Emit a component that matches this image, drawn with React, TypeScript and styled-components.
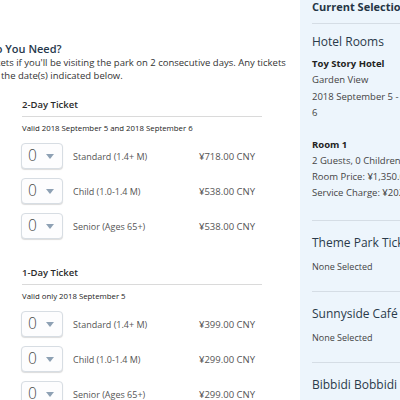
import React from "react";
import styled, { createGlobalStyle } from "styled-components";

const Global = createGlobalStyle`
  html, body { margin: 0; padding: 0; background: #fff; overflow: hidden; }
  body { font-family: "Open Sans", "Noto Sans", "Liberation Sans", sans-serif; }
`;

const Page = styled.div`
  display: flex;
  width: 400px;
  height: 400px;
  overflow: hidden;
`;

const Main = styled.div`
  width: 300px;
  flex: none;
  padding-top: 40px;
  box-sizing: border-box;
  overflow: hidden;
`;

const Intro = styled.div`
  margin-left: -88px;
  white-space: nowrap;
`;

const Heading = styled.h1`
  margin: 0;
  font-size: 11px;
  line-height: 17px;
  font-weight: 600;
  color: #26384c;
`;

const Para = styled.p`
  margin: 0;
  font-size: 9.5px;
  line-height: 12.5px;
  color: #333;
`;

const Line = styled.span`
  display: block;
`;

const Section = styled.section<{ $top: number }>`
  margin-top: ${(p) => p.$top}px;
  padding-left: 21px;
  width: 262px;
  box-sizing: border-box;
`;

const SectionTitle = styled.h2`
  margin: 0 0 0 1px;
  padding-bottom: 4px;
  font-size: 9.5px;
  line-height: 14px;
  font-weight: 600;
  color: #2b2b2b;
  border-bottom: 1px solid #dadada;
`;

const Valid = styled.div`
  margin: 5px 0 0 1px;
  font-size: 7.8px;
  line-height: 12px;
  color: #222;
`;

const Rows = styled.div`
  margin-top: 9px;
  display: flex;
  flex-direction: column;
  gap: 9px;
`;

const Row = styled.div`
  display: flex;
  align-items: center;
  height: 26px;
`;

const Select = styled.div`
  width: 42px;
  height: 26px;
  box-sizing: border-box;
  border: 1px solid #d7dde3;
  border-radius: 4px;
  box-shadow: 0 1px 1px rgba(0, 0, 0, 0.14);
  background: #fdfdfe;
  display: flex;
  align-items: center;
  padding-left: 6px;
  gap: 9px;
`;

const Count = styled.span`
  font-size: 15.5px;
  font-weight: 300;
  color: #4a4a4a;
  line-height: 1;
`;

const Caret = styled.span`
  width: 0;
  height: 0;
  border-left: 4.5px solid transparent;
  border-right: 4.5px solid transparent;
  border-top: 5px solid #8ea1b4;
  margin-top: 1px;
`;

const Label = styled.span`
  margin-left: 10px;
  width: 126px;
  font-size: 9px;
  color: #555;
`;

const Price = styled.span`
  font-size: 9.5px;
  color: #555;
`;

const Panel = styled.aside`
  flex: 1;
  background: #edf5fc;
  padding-left: 12px;
  white-space: nowrap;
  overflow: hidden;
  color: #3b3b3b;
`;

const PanelTitle = styled.div`
  font-size: 11px;
  line-height: 14px;
  font-weight: 700;
  color: #253545;
  padding-bottom: 9px;
  border-bottom: 1px solid #d5dde5;
`;

const Group = styled.div<{ $pad: number }>`
  padding-bottom: ${(p) => p.$pad}px;
  border-bottom: 1px solid #d5dde5;
`;

const GroupTitle = styled.div<{ $top: number }>`
  margin-top: ${(p) => p.$top}px;
  font-size: 12px;
  line-height: 18px;
  color: #2a3a4a;
`;

const InfoBlock = styled.div<{ $top: number; $lh: number }>`
  margin-top: ${(p) => p.$top}px;
  font-size: 9.5px;
  line-height: ${(p) => p.$lh}px;
  color: #444;
`;

const Strong = styled.div`
  font-weight: 700;
  color: #222;
`;

const None = styled.div`
  margin-top: 8px;
  font-size: 9px;
  line-height: 14px;
  color: #444;
`;

type Ticket = { label: string; price: string };

const TicketSection = ({
  top,
  title,
  valid,
  tickets,
}: {
  top: number;
  title: string;
  valid: string;
  tickets: Ticket[];
}) => (
  <Section $top={top}>
    <SectionTitle>{title}</SectionTitle>
    <Valid>{valid}</Valid>
    <Rows>
      {tickets.map((t) => (
        <Row key={t.label}>
          <Select>
            <Count>0</Count>
            <Caret />
          </Select>
          <Label>{t.label}</Label>
          <Price>{t.price}</Price>
        </Row>
      ))}
    </Rows>
  </Section>
);

export default function App() {
  return (
    <>
      <Global />
      <Page>
        <Main>
          <Intro>
            <Heading>Which Tickets Do You Need?</Heading>
            <Para>
              <Line>
                Purchase 2-Day Tickets if you'll be visiting the park on 2 consecutive days. Any tickets
              </Line>
              <Line>will be valid only on the date(s) indicated below.</Line>
            </Para>
          </Intro>
          <TicketSection
            top={16}
            title="2-Day Ticket"
            valid="Valid 2018 September 5 and 2018 September 6"
            tickets={[
              { label: "Standard (1.4+ M)", price: "¥718.00 CNY" },
              { label: "Child (1.0-1.4 M)", price: "¥538.00 CNY" },
              { label: "Senior (Ages 65+)", price: "¥538.00 CNY" },
            ]}
          />
          <TicketSection
            top={27}
            title="1-Day Ticket"
            valid="Valid only 2018 September 5"
            tickets={[
              { label: "Standard (1.4+ M)", price: "¥399.00 CNY" },
              { label: "Child (1.0-1.4 M)", price: "¥299.00 CNY" },
              { label: "Senior (Ages 65+)", price: "¥299.00 CNY" },
            ]}
          />
        </Main>
        <Panel>
          <PanelTitle>Current Selection</PanelTitle>
          <Group $pad={19}>
            <GroupTitle $top={9}>Hotel Rooms</GroupTitle>
            <InfoBlock $top={5} $lh={16.3}>
              <Strong>Toy Story Hotel</Strong>
              <div>Garden View</div>
              <div>2018 September 5 -</div>
              <div>6</div>
            </InfoBlock>
            <InfoBlock $top={16} $lh={16}>
              <Strong>Room 1</Strong>
              <div>2 Guests, 0 Children</div>
              <div>Room Price: ¥1,350.00 CNY</div>
              <div>Service Charge: ¥202.50 CNY</div>
            </InfoBlock>
          </Group>
          <Group $pad={17}>
            <GroupTitle $top={13}>Theme Park Tickets</GroupTitle>
            <None>None Selected</None>
          </Group>
          <Group $pad={17}>
            <GroupTitle $top={13}>Sunnyside Café</GroupTitle>
            <None>None Selected</None>
          </Group>
          <GroupTitle $top={13}>Bibbidi Bobbidi Boutique</GroupTitle>
        </Panel>
      </Page>
    </>
  );
}
